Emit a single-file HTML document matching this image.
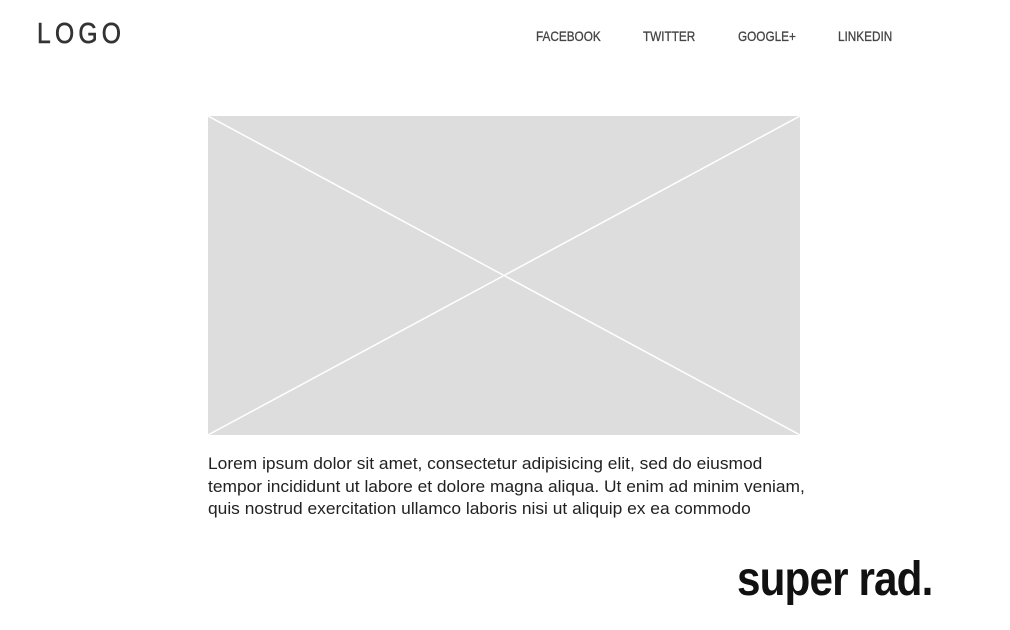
<!DOCTYPE html>
<html><head><style>
body{margin:0;width:1010px;height:630px;background:#fff;font-family:"Liberation Sans",sans-serif;position:relative;overflow:hidden}
.a{position:absolute;white-space:nowrap;transform-origin:0 0}
</style></head><body>
<div class="a" style="left:37px;top:18px;font-size:29px;letter-spacing:5px;color:#333;transform:scaleX(0.85);-webkit-text-stroke:0.6px #333">LOGO</div>
<div class="a" style="left:536px;top:28px;font-size:14px;color:#444;transform:scaleX(0.84);-webkit-text-stroke:0.3px #444">FACEBOOK</div>
<div class="a" style="left:643px;top:28px;font-size:14px;color:#444;transform:scaleX(0.84);-webkit-text-stroke:0.3px #444">TWITTER</div>
<div class="a" style="left:738px;top:28px;font-size:14px;color:#444;transform:scaleX(0.84);-webkit-text-stroke:0.3px #444">GOOGLE+</div>
<div class="a" style="left:838px;top:28px;font-size:14px;color:#444;transform:scaleX(0.84);-webkit-text-stroke:0.3px #444">LINKEDIN</div>
<svg class="a" style="left:208px;top:116px" width="592" height="319"><rect width="592" height="319" fill="#dddddd"/><line x1="0" y1="0" x2="592" y2="319" stroke="#fff" stroke-width="1.5"/><line x1="592" y1="0" x2="0" y2="319" stroke="#fff" stroke-width="1.5"/></svg>
<div class="a" style="left:208px;top:453px;font-size:17px;line-height:22.5px;color:#222;transform:scaleX(1.022)">Lorem ipsum dolor sit amet, consectetur adipisicing elit, sed do eiusmod<br>tempor incididunt ut labore et dolore magna aliqua. Ut enim ad minim veniam,<br>quis nostrud exercitation ullamco laboris nisi ut aliquip ex ea commodo</div>
<div class="a" style="left:737px;top:552px;font-size:48px;font-weight:bold;color:#111;letter-spacing:-1px;transform:scaleX(0.88)">super rad.</div>
</body></html>
